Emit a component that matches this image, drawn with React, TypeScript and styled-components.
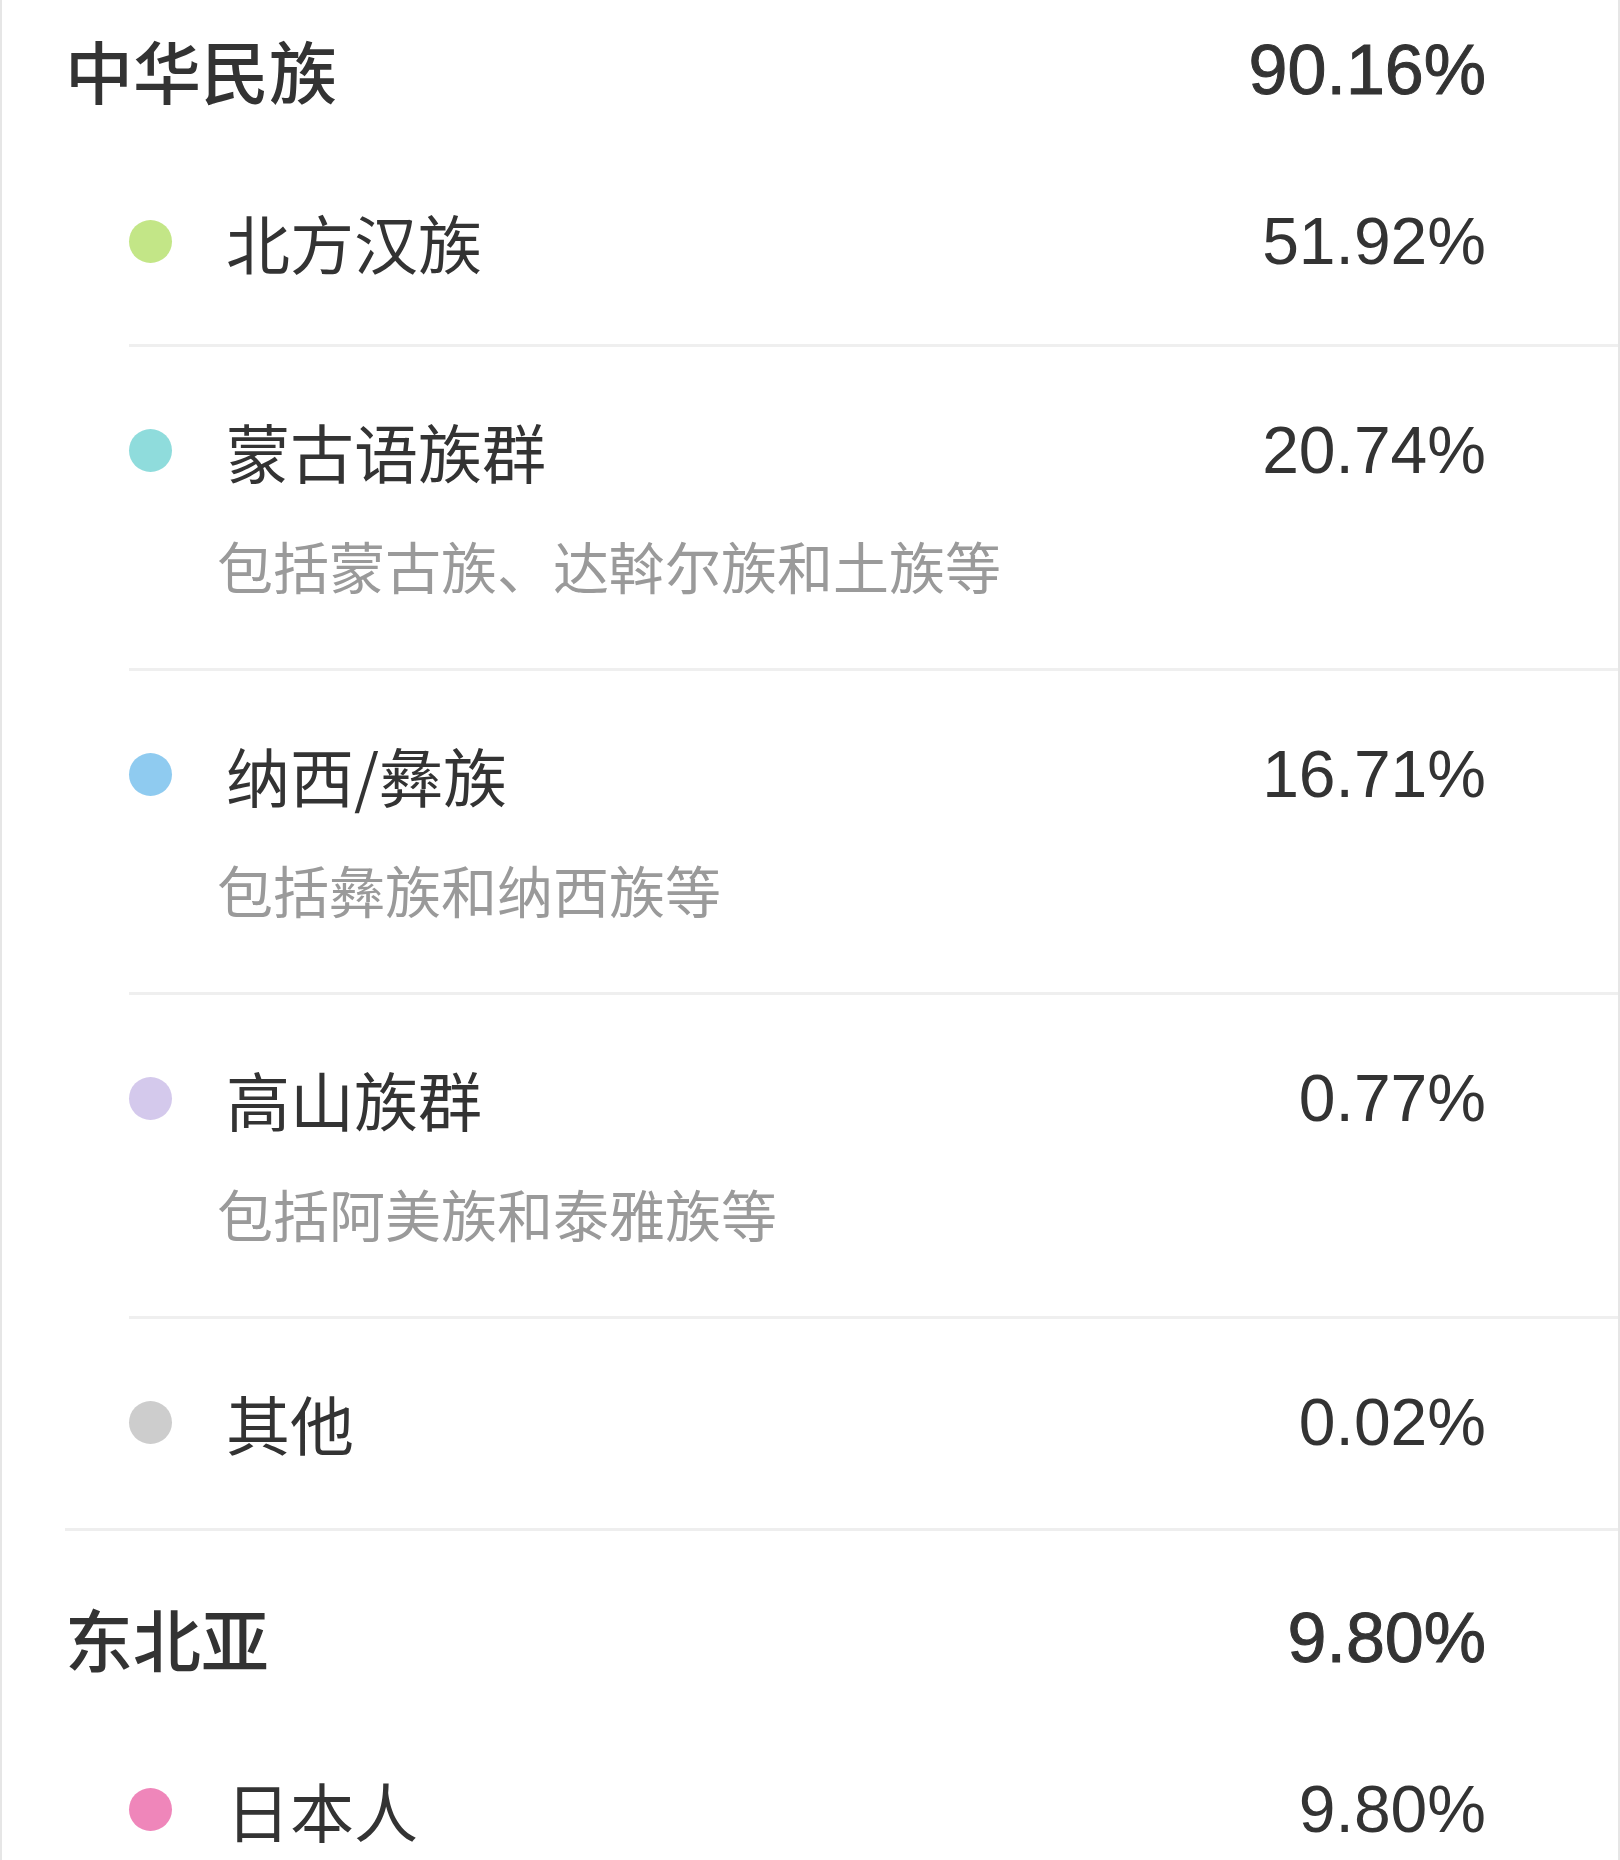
import styled, { createGlobalStyle } from "styled-components";

const GlobalStyle = createGlobalStyle`
  html, body {
    margin: 0;
    padding: 0;
    background: #fff;
    overflow: hidden;
  }
  body {
    font-family: "Noto Sans CJK SC", "Noto Sans", sans-serif;
    color: #333;
  }
`;

// the screenshot is a scrolled view, so the card starts a little above the top
const Card = styled.div`
  width: 1620px;
  box-sizing: border-box;
  margin-top: -37px;
  border-left: 2px solid #e6e6e6;
  border-right: 2px solid #e6e6e6;
  background: #fff;
`;

const Group = styled.section`
  margin-left: 63px;
  border-bottom: 3px solid #eeeeee;
`;

const GroupHead = styled.div`
  display: flex;
  align-items: center;
  justify-content: space-between;
  padding: 72px 132px 33px 0;
`;

const Title = styled.h2`
  margin: 0;
  font-family: "Noto Sans CJK SC", sans-serif;
  font-size: 68px;
  font-weight: 500;
  line-height: 70px;
  color: #333;
`;

const Total = styled.span`
  font-family: "Liberation Sans", Arial, sans-serif;
  font-size: 70px;
  line-height: 70px;
  color: #333;
  -webkit-text-stroke: 1px #333;
`;

const List = styled.ul`
  list-style: none;
  margin: 0 0 0 64px;
  padding: 0;
`;

const Item = styled.li`
  padding: 68px 132px 68px 0;
  border-bottom: 3px solid #efefef;

  &:last-child {
    border-bottom: none;
    padding-bottom: 71px;
  }
`;

const Row = styled.div`
  display: flex;
  align-items: center;
  height: 70px;
`;

const Dot = styled.span<{ color: string }>`
  flex-shrink: 0;
  width: 43px;
  height: 43px;
  border-radius: 50%;
  background: ${(props) => props.color};
  margin-right: 54px;
`;

const Name = styled.span`
  flex: 1;
  font-family: "Noto Sans CJK SC", sans-serif;
  font-size: 64px;
  line-height: 70px;
  color: #333;
`;

const Share = styled.span`
  font-family: "Liberation Sans", Arial, sans-serif;
  font-size: 66px;
  line-height: 70px;
  color: #333;
`;

const Note = styled.div`
  margin-top: 45px;
  padding-left: 88px;
  font-family: "Noto Sans CJK SC", sans-serif;
  font-size: 56px;
  line-height: 70px;
  color: #9a9a9a;
`;

type Entry = { name: string; share: string; color: string; note?: string };
type Region = { title: string; total: string; items: Entry[] };

const regions: Region[] = [
  {
    title: "中华民族",
    total: "90.16%",
    items: [
      { name: "北方汉族", share: "51.92%", color: "#c3e687" },
      { name: "蒙古语族群", share: "20.74%", color: "#8fdcdc", note: "包括蒙古族、达斡尔族和土族等" },
      { name: "纳西/彝族", share: "16.71%", color: "#8fcbf0", note: "包括彝族和纳西族等" },
      { name: "高山族群", share: "0.77%", color: "#d4c9ec", note: "包括阿美族和泰雅族等" },
      { name: "其他", share: "0.02%", color: "#cdcdcd" },
    ],
  },
  {
    title: "东北亚",
    total: "9.80%",
    items: [{ name: "日本人", share: "9.80%", color: "#ef86ba" }],
  },
];

const App = () => {
  return (
    <>
      <GlobalStyle />
      <Card>
        {regions.map((region) => (
          <Group key={region.title}>
            <GroupHead>
              <Title>{region.title}</Title>
              <Total>{region.total}</Total>
            </GroupHead>
            <List>
              {region.items.map((item) => (
                <Item key={item.name}>
                  <Row>
                    <Dot color={item.color} />
                    <Name>{item.name}</Name>
                    <Share>{item.share}</Share>
                  </Row>
                  {item.note && <Note>{item.note}</Note>}
                </Item>
              ))}
            </List>
          </Group>
        ))}
      </Card>
    </>
  );
};

export default App;
